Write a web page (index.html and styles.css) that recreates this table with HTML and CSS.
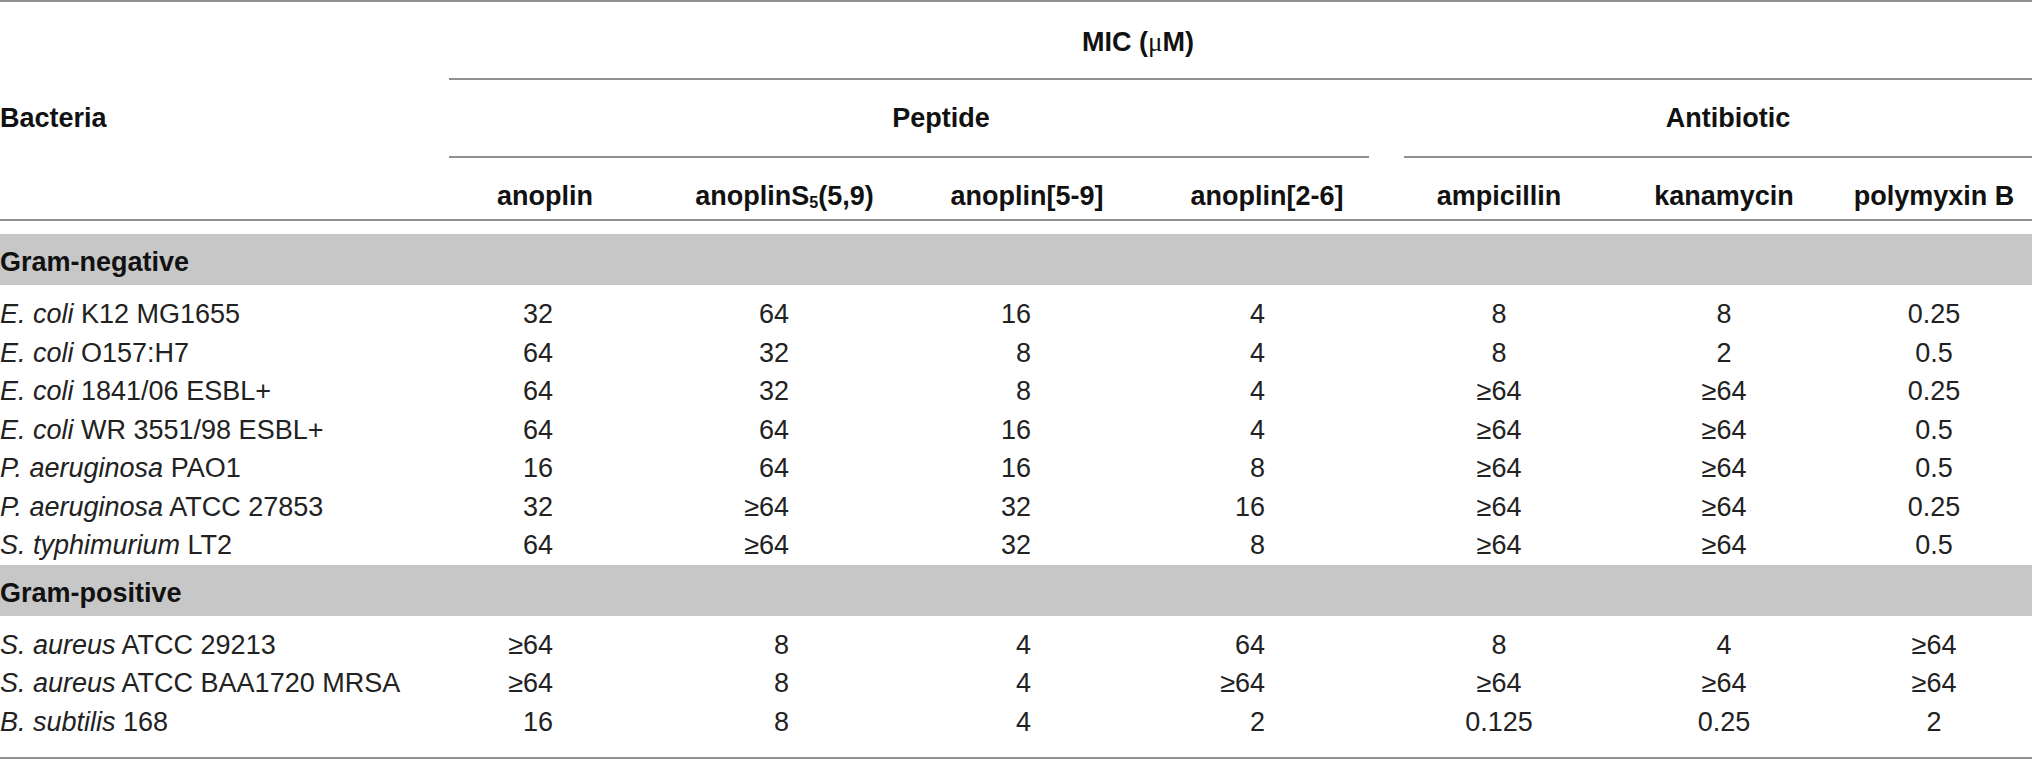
FILE: index.html
```html
<!DOCTYPE html>
<html lang="en">
<head>
    <meta charset="UTF-8">
    <meta name="viewport" content="width=device-width, initial-scale=1.0">
    <title>MIC of anoplin peptides</title>
    <link rel="stylesheet" href="styles.css">
</head>
<body>
    <table class="mic-table">
        <colgroup>
            <col class="c-name">
            <col class="c-1">
            <col class="c-2">
            <col class="c-3">
            <col class="c-4">
            <col class="c-5">
            <col class="c-6">
            <col class="c-7">
        </colgroup>
        <thead>
            <tr>
                <th rowspan="3" class="bacteria">Bacteria</th>
                <th colspan="7" class="span-cell"><div class="span-label mic">MIC (<span class="mu">&mu;</span>M)</div></th>
            </tr>
            <tr>
                <th colspan="4" class="span-cell peptide"><div class="span-label">Peptide</div></th>
                <th colspan="3" class="span-cell antibiotic"><div class="span-label">Antibiotic</div></th>
            </tr>
            <tr class="col-heads">
                <th class="first-head">anoplin</th>
                <th>anoplinS<sub>5</sub>(5,9)</th>
                <th>anoplin[5-9]</th>
                <th>anoplin[2-6]</th>
                <th>ampicillin</th>
                <th>kanamycin</th>
                <th>polymyxin B</th>
            </tr>
        </thead>
        <tbody>
            <tr class="group"><td colspan="8">Gram-negative</td></tr>
            <tr class="first">
                <td><i>E. coli</i> K12 MG1655</td>
                <td>32</td><td>64</td><td>16</td><td>4</td>
                <td>8</td><td>8</td><td>0.25</td>
            </tr>
            <tr>
                <td><i>E. coli</i> O157:H7</td>
                <td>64</td><td>32</td><td>8</td><td>4</td>
                <td>8</td><td>2</td><td>0.5</td>
            </tr>
            <tr>
                <td><i>E. coli</i> 1841/06 ESBL+</td>
                <td>64</td><td>32</td><td>8</td><td>4</td>
                <td>&ge;64</td><td>&ge;64</td><td>0.25</td>
            </tr>
            <tr>
                <td><i>E. coli</i> WR 3551/98 ESBL+</td>
                <td>64</td><td>64</td><td>16</td><td>4</td>
                <td>&ge;64</td><td>&ge;64</td><td>0.5</td>
            </tr>
            <tr>
                <td><i>P. aeruginosa</i> PAO1</td>
                <td>16</td><td>64</td><td>16</td><td>8</td>
                <td>&ge;64</td><td>&ge;64</td><td>0.5</td>
            </tr>
            <tr>
                <td><i>P. aeruginosa</i> ATCC 27853</td>
                <td>32</td><td>&ge;64</td><td>32</td><td>16</td>
                <td>&ge;64</td><td>&ge;64</td><td>0.25</td>
            </tr>
            <tr>
                <td><i>S. typhimurium</i> LT2</td>
                <td>64</td><td>&ge;64</td><td>32</td><td>8</td>
                <td>&ge;64</td><td>&ge;64</td><td>0.5</td>
            </tr>
            <tr class="group"><td colspan="8">Gram-positive</td></tr>
            <tr class="first">
                <td><i>S. aureus</i> ATCC 29213</td>
                <td>&ge;64</td><td>8</td><td>4</td><td>64</td>
                <td>8</td><td>4</td><td>&ge;64</td>
            </tr>
            <tr>
                <td><i>S. aureus</i> ATCC BAA1720 MRSA</td>
                <td>&ge;64</td><td>8</td><td>4</td><td>&ge;64</td>
                <td>&ge;64</td><td>&ge;64</td><td>&ge;64</td>
            </tr>
            <tr class="last">
                <td><i>B. subtilis</i> 168</td>
                <td>16</td><td>8</td><td>4</td><td>2</td>
                <td>0.125</td><td>0.25</td><td>2</td>
            </tr>
        </tbody>
    </table>
</body>
</html>
```

FILE: styles.css
```css
body {
    margin: 0;
    background-color: white;
    font-family: "Liberation Sans", Arial, sans-serif;
    font-size: 27px;
    color: #222;
}
.mic-table {
    width: 2032px;
    table-layout: fixed;
    border-collapse: separate;
    border-spacing: 0;
    border-top: 2px solid #8f9091;
    border-bottom: 2px solid #8f9091;
}
.c-name { width: 449px; }
.c-1 { width: 214px; }
.c-2 { width: 243px; }
.c-3 { width: 242px; }
.c-4 { width: 238px; }
.c-5 { width: 226px; }
.c-6 { width: 224px; }
.c-7 { width: 196px; }

th {
    padding: 0;
    font-weight: bold;
    color: #111;
}
th, td {
    white-space: nowrap;
}
.bacteria {
    text-align: left;
    vertical-align: top;
    padding-top: 103px;
    line-height: 27px;
    border-bottom: 2px solid #8f9091;
}

/* spanning headers: the rule sits on the inner label so it can be inset */
.span-cell {
    vertical-align: top;
}
.span-label {
    height: 76px;
    line-height: 76px;
    border-bottom: 2px solid #8f9091;
}
.span-label.mic {
    height: 71px;
    line-height: 71px;
    padding-top: 5px;
    padding-right: 205px;
}
.mu {
    font-family: "Liberation Serif", "Times New Roman", serif;
    font-weight: normal;
}
.peptide {
    padding-right: 17px;
}
.peptide .span-label {
    padding-left: 64px;
}
.antibiotic {
    padding-left: 18px;
}
.antibiotic .span-label {
    padding-left: 20px;
}

.col-heads {
    height: 63px;
}
.col-heads th {
    vertical-align: bottom;
    line-height: 27px;
    padding-bottom: 9px;
    border-bottom: 2px solid #8f9091;
}
.col-heads .first-head {
    padding-right: 22px;
}
sub {
    font-size: 16px;
    line-height: 0;
    vertical-align: -3px;
}

/* group bands */
.group td {
    background-color: #c6c7c6;
    font-weight: bold;
    color: #111;
    line-height: 27px;
    padding: 15px 0 9px;
}
tbody tr:first-child td {
    border-top: 13px solid white;
}

td {
    padding: 0;
    line-height: 38.5px;
    text-align: center;
}
td:first-child {
    text-align: left;
}
/* peptide columns: numbers flush right */
td:nth-child(2),
td:nth-child(3),
td:nth-child(4),
td:nth-child(5) {
    text-align: right;
}
td:nth-child(2) { padding-right: 110px; }
td:nth-child(3) { padding-right: 117px; }
td:nth-child(4) { padding-right: 117px; }
td:nth-child(5) { padding-right: 121px; }

.first td {
    padding-top: 10px;
}
.last td {
    padding-bottom: 16px;
}
.group td:first-child {
    text-align: left;
    padding-right: 0;
}
```
